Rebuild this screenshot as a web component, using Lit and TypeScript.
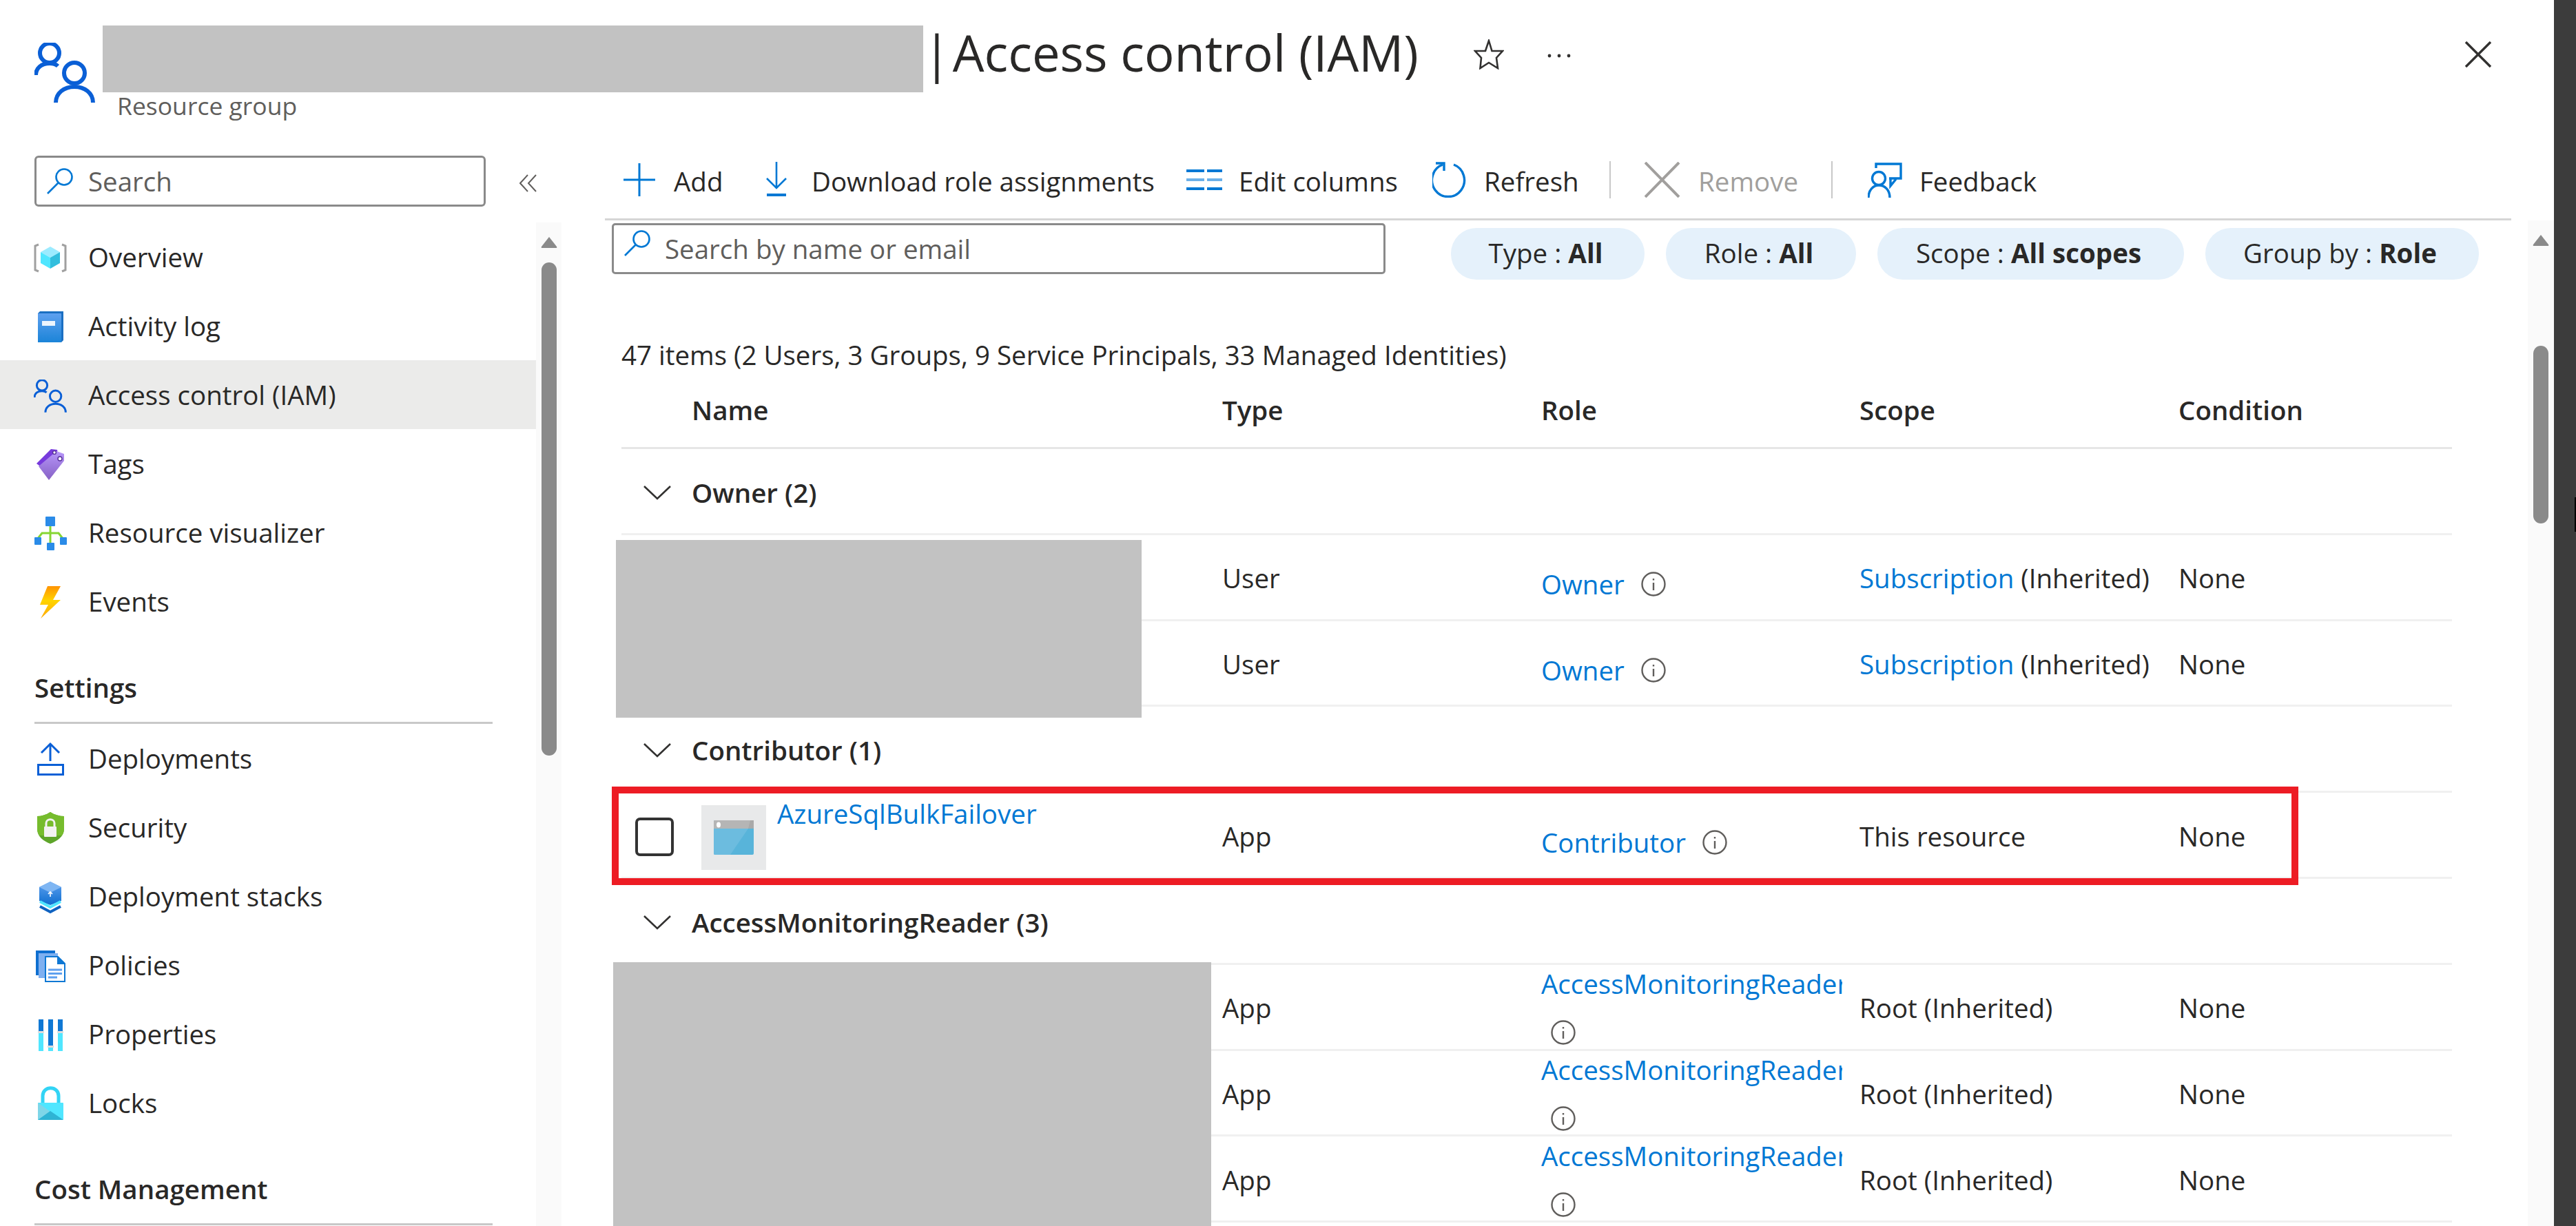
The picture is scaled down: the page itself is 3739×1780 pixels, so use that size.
import { LitElement, html, css, svg } from "lit";
import { customElement } from "lit/decorators.js";

const people = (w: number, h: number, sw: number) => html`<svg width=${w} height=${h} viewBox="0 0 88 87" fill="none" stroke="#0a5fd6" stroke-width=${sw}>
  <circle cx="22" cy="15" r="14"/><path d="M2 47C2 37 10 30 22 30C27 30 31 31 34 34"/>
  <circle cx="58" cy="44" r="15"/><path d="M31 87C31 73 43 64 58 64C73 64 85 73 85 87"/></svg>`;

const mag = html`<svg width="38" height="38" viewBox="0 0 38 38" fill="none" stroke="#0078d4" stroke-width="2.6"><circle cx="25" cy="13" r="11.5"/><path d="M16.5 21.5L1 37"/></svg>`;

const info = html`<svg class="info" width="36" height="36" viewBox="0 0 36 36" fill="none" stroke="#605e5c" stroke-width="2.4"><circle cx="18" cy="18" r="16.5"/><path d="M18 16V27" /><path d="M18 10V12.5"/></svg>`;

const icons: Record<string, any> = {
  overview: svg`<path d="M7 8L2 10V45L7 47M41 8L46 10V45L41 47" stroke="#a0a0a0" stroke-width="3" fill="none"/>
    <polygon points="24,11 38,19 24,27 10,19" fill="#9cebff"/><polygon points="10,19 24,27 24,43 10,35" fill="#50e6ff"/><polygon points="38,19 24,27 24,43 38,35" fill="#32bedd"/>`,
  log: svg`<defs><linearGradient id="bk" x1="0" y1="0" x2="0" y2="1"><stop offset="0" stop-color="#5ea0ef"/><stop offset="1" stop-color="#1b84d8"/></linearGradient></defs>
    <path d="M9 5H43V47L40 50H6V8Z" fill="#1b6fc2"/><rect x="6" y="8" width="34" height="42" rx="1" fill="url(#bk)"/><rect x="12" y="19" width="19" height="7" fill="#fff" opacity=".9"/>`,
  tags: svg`<defs><linearGradient id="tg" x1="0" y1="0" x2="0" y2="1"><stop offset="0" stop-color="#b796f9"/><stop offset="1" stop-color="#8661c5"/></linearGradient></defs>
    <polygon points="25,5 34,6 35,12 12,32 4,26" fill="#773adc"/><polygon points="33,8 44,12 44,22 22,50 7,30" fill="url(#tg)"/>
    <circle cx="30" cy="10" r="2.4" fill="#fff" stroke="#552f99" stroke-width="1.4"/><circle cx="38" cy="19" r="3" fill="#fff" stroke="#552f99" stroke-width="1.4"/>`,
  viz: svg`<path d="M24 15V44M5 36L12 27H36L43 36" stroke="#86d633" stroke-width="3" fill="none"/>
    <rect x="17" y="3" width="14" height="14" rx="1" fill="#2a8be8"/><rect x="1" y="33" width="10" height="11" rx="1" fill="#2a8be8"/><rect x="38" y="33" width="10" height="11" rx="1" fill="#2a8be8"/><rect x="19" y="41" width="11" height="11" rx="1" fill="#2a8be8"/>`,
  events: svg`<defs><linearGradient id="ev" x1="0" y1="0" x2="0" y2="1"><stop offset="0" stop-color="#ff9300"/><stop offset=".45" stop-color="#ffd400"/><stop offset="1" stop-color="#ffa800"/></linearGradient></defs>
    <polygon points="20,4 39,4 28,24 39,24 10,51 21,31 9,31" fill="url(#ev)"/>`,
  deploy: svg`<path d="M24 5V30M11 18L24 5L37 18" stroke="#0a5fd6" stroke-width="3" fill="none"/><rect x="6.5" y="35.5" width="36" height="14" stroke="#0a5fd6" stroke-width="3" fill="none"/>`,
  security: svg`<path d="M24 4C30 8 38 10 44 10V28C44 40 34 46 24 50C14 46 5 40 5 28V10C11 10 18 8 24 4Z" fill="#5ea52a"/><path d="M24 4C30 8 38 10 44 10V28C44 32 43 35 41 38H8C6 35 5 32 5 28V10C11 10 18 8 24 4Z" fill="#76bc2d"/>
    <path d="M18 26V20C18 13 30 13 30 20V26" stroke="#f2f2f2" stroke-width="3" fill="none"/><rect x="15" y="25" width="18" height="15" rx="1" fill="#f2f2f2"/>`,
  stacks: svg`<defs><linearGradient id="st" x1="0" y1="0" x2="0" y2="1"><stop offset="0" stop-color="#5ea0ef"/><stop offset="1" stop-color="#0f6fd0"/></linearGradient></defs>
    <polygon points="24,5 40,13 40,33 24,39 8,33 8,13" fill="url(#st)"/><polygon points="24,5 40,13 24,21 8,13" fill="#7fb6f3"/><path d="M24 27V20M21 23L24 20L27 23" stroke="#fff" stroke-width="1.6" fill="none"/>
    <path d="M9 34L24 42L39 34" stroke="#50e6ff" stroke-width="4" fill="none"/><path d="M9 41L24 49L39 41" stroke="#0f62c0" stroke-width="4" fill="none"/>`,
  policies: svg`<rect x="3" y="5" width="28" height="36" fill="#0f6fd0"/><rect x="7" y="9" width="28" height="36" fill="#7fb0f0"/>
    <path d="M17 14H35L45 24V50H17Z" fill="#fff" stroke="#0f78d4" stroke-width="2"/><path d="M34 13V25H46Z" fill="#0f78d4"/>
    <path d="M21 33H41M21 38.500H41M21 44H34" stroke="#5ea0ef" stroke-width="3"/>`,
  props: svg`<rect x="7" y="5" width="7" height="17" fill="#0f78d4"/><rect x="7" y="25" width="7" height="26" fill="#50e6ff"/><rect x="6" y="22" width="9" height="3" fill="#ddd"/>
    <rect x="21" y="5" width="7" height="38" fill="#0f78d4"/><rect x="21" y="46" width="7" height="5" fill="#50e6ff"/><rect x="20" y="43" width="9" height="3" fill="#ddd"/>
    <rect x="35" y="5" width="7" height="17" fill="#0f78d4"/><rect x="35" y="25" width="7" height="26" fill="#50e6ff"/><rect x="34" y="22" width="9" height="3" fill="#ddd"/>`,
  locks: svg`<path d="M13 28V16C13 1 36 1 36 16V28" stroke="#32d4f5" stroke-width="5" fill="none"/><rect x="6" y="26" width="37" height="25" rx="1" fill="#50e6ff"/>
    <polygon points="6,26 24,39 6,51" fill="#7fd6e8"/><polygon points="6,51 24,38 43,51" fill="#2fb3d4"/>`,
};

const nav = (id: string, label: string, active = false) => html`<div class="nav ${active ? "active" : ""}">
  ${id === "iam"
    ? html`<span class="ic"><svg width="48" height="48" viewBox="0 0 88 87" fill="none" stroke="#0a5fd6" stroke-width="5.500"><circle cx="22" cy="15" r="14"/><path d="M2 47C2 37 10 30 22 30C27 30 31 31 34 34"/><circle cx="58" cy="44" r="15"/><path d="M31 87C31 73 43 64 58 64C73 64 85 73 85 87"/></svg></span>`
    : html`<span class="ic"><svg width="48" height="56" viewBox="0 0 48 56">${icons[id]}</svg></span>`}
  <span>${label}</span></div>`;

const chevron = html`<svg class="chev" width="48" height="22" viewBox="0 0 48 22" fill="none" stroke="#323130" stroke-width="2.6"><path d="M5 2L24 20L43 2"/></svg>`;

const scrollbar = (cls: string) => html`<div class="sb ${cls}"><svg class="up" width="24" height="18" viewBox="0 0 24 18"><path d="M12 1L23 15Q24 17 22 17H2Q0 17 1 15Z" fill="#8a8a8a"/></svg><div class="thumb"></div></div>`;

@customElement("app-root")
export class AppRoot extends LitElement {
  static styles = css`
    :host { display: block; width: 3739px; height: 1780px; overflow: hidden; background: #fff; font-family: "Open Sans", "Liberation Sans", sans-serif; font-size: 38.5px; color: #292827; }
    .page { display: flex; width: 3739px; height: 1780px; position: relative; }
    .win { width: 3707px; display: flex; flex-direction: column; height: 1780px; }
    .dark { width: 32px; background: #3c3c3c; display: flex; flex-direction: column; align-items: flex-end; }
    .cursor { width: 2px; height: 50px; background: #000; margin-top: 722px; }
    .head { height: 190px; display: flex; padding-left: 50px; flex: none; }
    .head > svg { margin-top: 62px; }
    .htext { margin-left: 11px; flex: 1; display: flex; flex-direction: column; }
    .titlerow { display: flex; align-items: center; margin-top: 37px; height: 97px; }
    .redact { background: #c2c2c2; }
    .redact.title { width: 1191px; height: 97px; }
    .title-t { display: flex; font-size: 72.4px; line-height: 97px; white-space: nowrap; width: 799px; box-sizing: border-box; height: 97px; margin-top: -18px; }
    .title-t span:last-child { margin-left: 3px; }
    .star { margin-bottom: 14px; }
    .dots { margin: 0 0 10px 63px; }
    .close { margin: 0 0 14px 1296px; }
    .sub { margin: -2px 0 0 21px; color: #605e5c; font-size: 35.5px; line-height: 42px; }
    .body { display: flex; flex: 1; min-height: 0; }
    .side { width: 815px; flex: none; display: flex; flex-direction: column; min-height: 0; }
    .sideTop { height: 133px; flex: none; display: flex; padding: 36px 0 0 50px; box-sizing: border-box; }
    .sbox { box-sizing: border-box; width: 655px; height: 74px; border: 3px solid #8a8a8a; border-radius: 6px; display: flex; align-items: center; padding-left: 15px; color: #605e5c; gap: 22px; }
    .coll { margin: 27px 0 0 49px; }
    .sideMain { display: flex; flex: 1; min-height: 0; }
    .list { width: 778px; flex: none; }
    .nav { height: 100px; display: flex; align-items: center; padding-left: 49px; }
    .nav.active { background: #ebebea; }
    .ic { width: 48px; margin-right: 31px; margin-top: 4px; display: flex; justify-content: center; flex: none; }
    .sect { height: 128px; margin: 0 63px 0 50px; box-sizing: border-box; border-bottom: 3px solid #c8c8c8; font-weight: 600; padding-top: 49px; line-height: 52px; }
    .sb { background: #fafafa; display: flex; flex-direction: column; align-items: center; width: 37px; flex: none; }
    .sb .up { margin-top: 20px; }
    .sb .thumb { width: 22px; background: #8a8a8a; border-radius: 11px; }
    .sb.left .thumb { height: 716px; margin-top: 20px; }
    .sb.right { width: 38px; }
    .sb.right .thumb { height: 258px; margin-top: 144px; }
    .main { flex: 1; display: flex; flex-direction: column; min-width: 0; }
    .tool { height: 130px; box-sizing: border-box; margin-left: 63px; width: 2767px; border-bottom: 3px solid #d6d6d6; flex: none; padding: 44px 0 0 27px; display: grid; grid-template-columns: 207px 610px 357px 257px 51px 271px 58px auto; align-items: start; }
    .ti { display: flex; align-items: center; height: 54px; white-space: nowrap; }
    .ti span { padding-top: 4px; }
    .ti svg { flex: none; }
    .ti.off { color: #a19f9d; }
    .fb { margin-left: -5px; }
    .sep { width: 2px; height: 54px; background: #c8c8c8; }
    .mainBody { flex: 1; display: flex; min-height: 0; }
    .content { flex: 1; position: relative; min-width: 0; }
    .filter { display: flex; height: 86px; padding-left: 73px; }
    .fbox { box-sizing: border-box; width: 1123px; height: 74px; margin-top: 4px; border: 3px solid #8a8a8a; border-radius: 5px; display: flex; align-items: flex-start; padding: 7px 0 0 15px; color: #605e5c; line-height: 54px; gap: 21px; }
    .pills { margin: 11px 0 0 95px; display: grid; grid-template-columns: 281px 276px 445px 397px; gap: 31px; height: 75px; }
    .pill { background: #e5f1fb; border-radius: 37px; display: flex; justify-content: center; align-items: center; white-space: pre; padding: 0 6px 3px 0; box-sizing: border-box; }
    .pill b { font-weight: 700; }
    .infoLine { margin: 84px 0 0 87px; height: 50px; line-height: 50px; white-space: nowrap; }
    .table { margin-left: 87px; width: 2657px; }
    .row { display: grid; grid-template-columns: 102px 770px 463px 462px 463px 397px; height: 124.8px; box-sizing: border-box; border-bottom: 3px solid #f0f0f0; align-items: center; padding-top: 3px; }
    .row.hd { height: 112px; border-bottom-color: #e6e6e6; font-weight: 600; padding-top: 0; }
    .row.group { font-weight: 600; padding-top: 4px; }
    .row.group .name { white-space: nowrap; }
    .chev { margin-left: 28px; }
    a { color: #0078d4; text-decoration: none; }
    .low { padding-top: 18px; display: flex; align-items: center; gap: 24px; white-space: nowrap; }
    .nw { white-space: nowrap; }
    .stack { display: flex; flex-direction: column; min-width: 0; width: 437px; }
    .stack a { white-space: nowrap; overflow: hidden; line-height: 50px; margin-top: -6px; }
    .stack svg { margin: 28px 0 0 14px; }
    .appRow { grid-template-columns: 872px 463px 462px 463px 397px; }
    .cb { width: 56px; height: 56px; box-sizing: border-box; border: 4px solid #333; border-radius: 7px; margin: 18px 0 0 20px; flex: none; }
    .appn { display: flex; align-items: flex-start; align-self: start; padding-top: 15px; box-sizing: border-box; gap: 16px; }
    .tile { width: 94px; height: 94px; background: #e8e9ea; display: flex; align-items: center; justify-content: center; flex: none; margin-left: 24px; }
    .appn a { margin-top: -11px; line-height: 46px; }
    .cover { position: absolute; }
    .cover.a { left: 79px; top: 464px; width: 763px; height: 258px; }
    .cover.b { left: 75px; top: 1077px; width: 868px; height: 400px; }
    .redbox { position: absolute; left: 73px; top: 822px; width: 2448px; height: 143px; box-sizing: border-box; border: 10px solid #ed1c24; }
  `;

  render() {
    const owner = html`<div class="row"><span></span><span></span><span>User</span><span class="low"><a>Owner</a>${info}</span><span class="nw"><a>Subscription</a> (Inherited)</span><span>None</span></div>`;
    const amr = html`<div class="row"><span></span><span></span><span>App</span><span class="stack"><a>AccessMonitoringReader</a>${info}</span><span class="nw">Root (Inherited)</span><span>None</span></div>`;
    return html`<div class="page">
      <div class="win">
        <header class="head">
          ${people(88, 87, 6)}
          <div class="htext">
            <div class="titlerow">
              <div class="redact title"></div>
              <div class="title-t"><span>|</span><span>Access control (IAM)</span></div>
              <svg class="star" width="44" height="44" viewBox="0 0 44 44" fill="none" stroke="#323130" stroke-width="2.6" stroke-linejoin="miter"><path d="M22 2L26.500 17H42L33 27L35 42L22 34L9.500 42L11 27L2 17H17Z"/></svg>
              <svg class="dots" width="36" height="8" viewBox="0 0 36 8" fill="#323130"><circle cx="3" cy="4" r="2.4"/><circle cx="17" cy="4" r="2.4"/><circle cx="31" cy="4" r="2.4"/></svg>
              <svg class="close" width="38" height="38" viewBox="0 0 38 38" stroke="#323130" stroke-width="3.400"><path d="M1 1L37 37M37 1L1 37"/></svg>
            </div>
            <div class="sub">Resource group</div>
          </div>
        </header>
        <div class="body">
          <aside class="side">
            <div class="sideTop">
              <div class="sbox">${mag}<span>Search</span></div>
              <svg class="coll" width="26" height="26" viewBox="0 0 26 26" fill="none" stroke="#605e5c" stroke-width="2"><path d="M12 1L1 13L12 25M24 1L13 13L24 25"/></svg>
            </div>
            <div class="sideMain">
              <div class="list">
                ${nav("overview", "Overview")}
                ${nav("log", "Activity log")}
                ${nav("iam", "Access control (IAM)", true)}
                ${nav("tags", "Tags")}
                ${nav("viz", "Resource visualizer")}
                ${nav("events", "Events")}
                <div class="sect">Settings</div>
                ${nav("deploy", "Deployments")}
                ${nav("security", "Security")}
                ${nav("stacks", "Deployment stacks")}
                ${nav("policies", "Policies")}
                ${nav("props", "Properties")}
                ${nav("locks", "Locks")}
                <div class="sect">Cost Management</div>
              </div>
              ${scrollbar("left")}
            </div>
          </aside>
          <main class="main">
            <div class="tool">
              <div class="ti"><svg width="73" height="48" viewBox="0 0 73 48" fill="none" stroke="#0078d4" stroke-width="3"><path d="M23 0V48M0 24H46"/></svg><span>Add</span></div>
              <div class="ti"><svg width="66" height="52" viewBox="0 0 66 52" fill="none" stroke="#0078d4"><path d="M15 0V38M1 24L15 38L29 24" stroke-width="2.6"/><path d="M1 48H29" stroke-width="4"/></svg><span>Download role assignments</span></div>
              <div class="ti"><svg width="76" height="30" viewBox="0 0 76 30" fill="#0078d4"><rect width="26" height="4" y="0"/><rect x="30" width="22" height="4"/><rect width="26" height="4" y="13" fill="#6bb0e8"/><rect x="30" y="13" width="22" height="4" fill="#6bb0e8"/><rect width="26" height="4" y="26"/><rect x="30" y="26" width="22" height="4"/></svg><span>Edit columns</span></div>
              <div class="ti"><svg width="75" height="52" viewBox="0 0 75 52" fill="none" stroke="#0078d4" stroke-width="3.400"><path d="M31 4A23.500 24 0 1 1 15 4"/><path d="M5 2H17V13"/></svg><span>Refresh</span></div>
              <div class="sep"></div>
              <div class="ti off"><svg width="78" height="52" viewBox="0 0 78 52" fill="none" stroke="#a19f9d" stroke-width="4"><path d="M1 1L50 51M50 1L1 51"/></svg><span>Remove</span></div>
              <div class="sep"></div>
              <div class="ti fb"><svg width="75" height="52" viewBox="0 0 75 52" fill="none" stroke="#0078d4" stroke-width="3.400"><path d="M12 9V3H48V24H31"/><path d="M33 24V35L41 25"/><circle cx="16" cy="24" r="9.500"/><path d="M1 52C1 41 8 34 16 34C25 34 32 41 32 52"/></svg><span>Feedback</span></div>
            </div>
            <div class="mainBody">
              <div class="content">
                <div class="filter">
                  <div class="fbox">${mag}<span>Search by name or email</span></div>
                  <div class="pills">
                    <div class="pill">Type : <b>All</b></div>
                    <div class="pill">Role : <b>All</b></div>
                    <div class="pill">Scope : <b>All scopes</b></div>
                    <div class="pill">Group by : <b>Role</b></div>
                  </div>
                </div>
                <div class="infoLine">47 items (2 Users, 3 Groups, 9 Service Principals, 33 Managed Identities)</div>
                <div class="table">
                  <div class="row hd"><span></span><span>Name</span><span>Type</span><span>Role</span><span>Scope</span><span>Condition</span></div>
                  <div class="row group">${chevron}<span class="name">Owner (2)</span></div>
                  ${owner}${owner}
                  <div class="row group">${chevron}<span class="name">Contributor (1)</span></div>
                  <div class="row appRow">
                    <div class="appn"><div class="cb"></div><div class="tile"><svg width="58" height="50" viewBox="0 0 58 50"><rect width="58" height="50" rx="2" fill="#58b4da"/><path d="M0 2Q0 0 2 0H58V12H0Z" fill="#a9a9a9"/><path d="M0 2Q0 0 2 0H53L50 12H0Z" fill="#b5b5b5"/><path d="M0 12H50L24 50H2Q0 50 0 48Z" fill="#6cbcdf"/><ellipse cx="7" cy="6.500" rx="3" ry="4" fill="#fff"/></svg></div><a>AzureSqlBulkFailover</a></div>
                    <span>App</span><span class="low"><a>Contributor</a>${info}</span><span>This resource</span><span>None</span>
                  </div>
                  <div class="row group">${chevron}<span class="name">AccessMonitoringReader (3)</span></div>
                  ${amr}${amr}${amr}
                </div>
                <div class="cover a redact"></div>
                <div class="cover b redact"></div>
                <div class="redbox"></div>
              </div>
              ${scrollbar("right")}
            </div>
          </main>
        </div>
      </div>
      <div class="dark"><div class="cursor"></div></div>
    </div>`;
  }
}
